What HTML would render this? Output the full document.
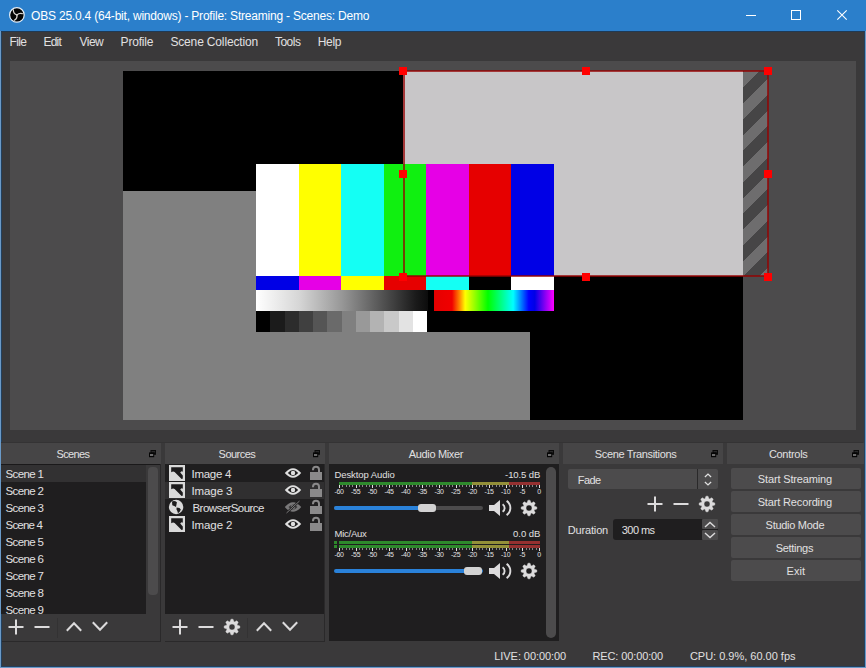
<!DOCTYPE html>
<html><head><meta charset="utf-8">
<style>
*{margin:0;padding:0;box-sizing:border-box}
html,body{width:866px;height:668px;overflow:hidden;background:#3a393a}
body{position:relative;font-family:"Liberation Sans",sans-serif;font-size:12px;color:#e1e0e1}
.a{position:absolute}
.t{position:absolute;white-space:nowrap;line-height:14px;letter-spacing:-0.3px}
.tx{position:absolute;white-space:nowrap;line-height:1}
.c{position:absolute;white-space:nowrap;line-height:14px;text-align:center;letter-spacing:-0.3px}
svg{position:absolute;overflow:visible}
.ic{fill:#dcdbdc}
.st{stroke:#dcdbdc;fill:none}
.h{position:absolute;width:8px;height:8px;background:#ff0000}
.dt{position:absolute;top:443px;height:21px;background:#464546}
.fl{position:absolute;top:450px;width:8px;height:8px}
.tick{position:absolute}
.lbl{position:absolute;font-size:7px;line-height:8px;white-space:nowrap;color:#e1e0e1;transform:translateX(-50%);letter-spacing:-0.3px}
.btn{position:absolute;left:731px;width:130px;height:21px;background:#4c4b4c;border-radius:2px;text-align:center;line-height:21px;letter-spacing:-0.3px}
</style></head><body>

<!-- window frame & title bar -->
<div class="a" style="left:0;top:0;width:866px;height:31px;background:#2b7fcb"></div>
<div class="a" style="left:0;top:31px;width:1px;height:637px;background:#6a9ac8"></div>
<div class="a" style="left:865px;top:31px;width:1px;height:637px;background:#6a9ac8"></div>
<div class="a" style="left:0;top:667px;width:866px;height:1px;background:#6a9ac8"></div>
<div class="a" style="left:1px;top:31px;width:1px;height:636px;background:#22405e"></div>
<div class="a" style="left:1px;top:31px;width:864px;height:1px;background:#1f3a55"></div>
<div class="a" style="left:864px;top:31px;width:1px;height:636px;background:#22405e"></div>
<div class="a" style="left:1px;top:666px;width:864px;height:1px;background:#22405e"></div>

<!-- OBS logo -->
<svg style="left:9px;top:7px" width="16" height="16" viewBox="0 0 16 16">
 <circle cx="7.9" cy="7.9" r="7.3" fill="#050505" stroke="#e6f0fa" stroke-width="1.2"/>
 <g stroke="#d8d4d0" stroke-width="1.3" fill="none" stroke-linecap="round">
  <path d="M7.9,7.9 Q4.6,7.2 4.3,3.0"/>
  <path d="M7.9,7.9 Q10.2,5.9 13.3,6.7"/>
  <path d="M7.9,7.9 Q8.6,11.4 5.3,13.3"/>
 </g>
</svg>

<!-- window controls -->
<div class="a" style="left:746px;top:15px;width:10px;height:1px;background:#fff"></div>
<div class="a" style="left:791px;top:10px;width:10px;height:10px;border:1px solid #fff"></div>
<svg style="left:837px;top:10px" width="10" height="10" viewBox="0 0 10 10"><path d="M0.3,0.3 L9.7,9.7 M9.7,0.3 L0.3,9.7" stroke="#fff" stroke-width="1.1"/></svg>

<!-- menubar -->

<!-- preview -->
<div class="a" style="left:10px;top:61px;width:846px;height:369px;background:#4c4b4c"></div>
<div class="a" style="left:123px;top:71px;width:620px;height:349px;background:#000"></div>
<div class="a" style="left:123px;top:191px;width:407px;height:229px;background:#808080"></div>
<div class="a" style="left:403px;top:71px;width:340px;height:205px;background:#c8c6c8"></div>
<div class="a" style="left:743px;top:71px;width:25px;height:205px;background:repeating-linear-gradient(-45deg,#6e6d6e 0px,#6e6d6e 6px,#464546 6px,#464546 17.2px,#6e6d6e 17.2px,#6e6d6e 22.27px)"></div>

<!-- test card -->
<div class="a" style="left:256px;top:164px;width:298px;height:168px;background:#000"></div>
<div class="a" style="left:256px;top:164px;width:298px;height:112px;display:flex">
 <div style="flex:1;background:#fff"></div><div style="flex:1;background:#ffff00"></div><div style="flex:1;background:#14fff4"></div><div style="flex:1;background:#10f010"></div><div style="flex:1;background:#e600e6"></div><div style="flex:1;background:#e60000"></div><div style="flex:1;background:#0000e6"></div>
</div>
<div class="a" style="left:256px;top:276px;width:298px;height:14px;display:flex">
 <div style="flex:1;background:#0000e6"></div><div style="flex:1;background:#e600e6"></div><div style="flex:1;background:#ffff00"></div><div style="flex:1;background:#e60000"></div><div style="flex:1;background:#14fff4"></div><div style="flex:1;background:#000"></div><div style="flex:1;background:#fff"></div>
</div>
<div class="a" style="left:256px;top:290px;width:172px;height:21px;background:linear-gradient(90deg,#fff 0%,#d6d6d6 25%,#979797 50%,#4e4e4e 75%,#1a1a1a 93%,#0c0c0c 100%)"></div>
<div class="a" style="left:434px;top:290px;width:120px;height:21px;background:linear-gradient(90deg,#e60000 0%,#f00000 15%,#ff8000 21%,#ffff00 26%,#00ff00 45%,#00ffff 66%,#0000ff 79%,#0000e6 84%,#ff00ff 100%)"></div>
<div class="a" style="left:256px;top:311px;width:171px;height:21px;display:flex">
 <div style="flex:1;background:#000"></div><div style="flex:1;background:#1b1b1b"></div><div style="flex:1;background:#2c2c2c"></div><div style="flex:1;background:#404040"></div><div style="flex:1;background:#555"></div><div style="flex:1;background:#6a6a6a"></div><div style="flex:1;background:#808080"></div><div style="flex:1;background:#999"></div><div style="flex:1;background:#b3b3b3"></div><div style="flex:1;background:#c9c9c9"></div><div style="flex:1;background:#e3e3e3"></div><div style="flex:1;background:#fff"></div>
</div>

<!-- selection box -->
<div class="a" style="left:403px;top:70px;width:366px;height:207px;border:2px solid rgba(150,0,0,0.72)"></div>
<div class="h" style="left:399px;top:67px"></div>
<div class="h" style="left:582px;top:67px"></div>
<div class="h" style="left:764px;top:67px"></div>
<div class="h" style="left:399px;top:170px"></div>
<div class="h" style="left:764px;top:170px"></div>
<div class="h" style="left:399px;top:273px"></div>
<div class="h" style="left:582px;top:273px"></div>
<div class="h" style="left:764px;top:273px"></div>

<!-- ============ DOCKS ============ -->
<svg width="0" height="0" style="position:absolute">
 <defs>
  <path id="gear" d="M6.15,2.61 L6.98,0.17 L9.02,0.17 L9.85,2.61 L10.51,2.88 L12.81,1.74 L14.26,3.19 L13.12,5.49 L13.39,6.15 L15.83,6.98 L15.83,9.02 L13.39,9.85 L13.12,10.51 L14.26,12.81 L12.81,14.26 L10.51,13.12 L9.85,13.39 L9.02,15.83 L6.98,15.83 L6.15,13.39 L5.49,13.12 L3.19,14.26 L1.74,12.81 L2.88,10.51 L2.61,9.85 L0.17,9.02 L0.17,6.98 L2.61,6.15 L2.88,5.49 L1.74,3.19 L3.19,1.74 L5.49,2.88Z M8,5 A3,3 0 1,0 8,11 A3,3 0 1,0 8,5Z" stroke="#dcdbdc" stroke-width="0.4" stroke-linejoin="round" fill-rule="evenodd"/>
  <g id="plus"><path d="M8,0.5 V15.5 M0.5,8 H15.5" stroke-width="2"/></g>
  <g id="minus"><path d="M0.5,8 H15.5" stroke-width="2"/></g>
  <g id="up"><path d="M0.8,9.8 L8,2.2 L15.2,9.8" stroke-width="2" fill="none"/></g>
  <g id="down"><path d="M0.8,1.2 L8,8.8 L15.2,1.2" stroke-width="2" fill="none"/></g>
  <g id="float"><path d="M1.5,0 h5.5 v4.8 h-5.5z" fill="#0a0a0a"/><path d="M2.5,1 h3.5 v1.5 h-3.5z" fill="#2a292a"/><path d="M0,2.4 h5.2 v4.8 h-5.2z" fill="#050505"/><path d="M1,4 h3.2 v2 h-3.2z" fill="#6a696a"/></g>
  <g id="img"><rect x="0" y="0" width="16" height="16" fill="#d9d9d9"/><path d="M2.2,2.2 H13.8 V6.9 Q13.2,5.9 12.2,6.6 L11.2,7.6 L13.8,10.6 V13.2 Q13.6,14.1 12.6,13.9 L5.6,7.0 Q4.4,6.0 3.2,6.8 L2.2,7.2 Z" fill="#1c1b1c"/></g>
  <g id="eye"><path d="M-0.2,5 Q8,-4.6 16.2,5 Q8,14.6 -0.2,5Z" fill="#e0e0e0"/><path d="M2.8,5 Q8,-0.9 13.2,5 Q8,10.9 2.8,5Z" fill="#1f1e1f"/><circle cx="8" cy="5" r="2.2" fill="#e0e0e0"/></g>
  <g id="lock"><rect x="0" y="6" width="12" height="8" fill="#8a898a"/><path d="M3,4.2 V3.8 A3,3 0 0,1 9,3.8 V6" stroke="#8a898a" stroke-width="2" fill="none"/></g>
 </defs>
</svg>

<!-- dock titles -->
<div class="a" style="left:1px;top:442px;width:862px;height:1px;background:#343334"></div>
<div class="dt" style="left:1px;width:160px"></div>
<div class="dt" style="left:165px;width:160px"></div>
<div class="dt" style="left:329px;width:230px"></div>
<div class="dt" style="left:563px;width:160px"></div>
<div class="dt" style="left:727px;width:137px"></div>
<svg class="fl" style="left:149px" width="8" height="8"><use href="#float"/></svg>
<svg class="fl" style="left:313px" width="8" height="8"><use href="#float"/></svg>
<svg class="fl" style="left:547px" width="8" height="8"><use href="#float"/></svg>
<svg class="fl" style="left:711px" width="8" height="8"><use href="#float"/></svg>
<svg class="fl" style="left:852px" width="8" height="8"><use href="#float"/></svg>

<!-- Scenes -->
<div class="a" style="left:1px;top:464px;width:145px;height:150px;background:#1f1e1f"></div>
<div class="a" style="left:1px;top:465px;width:145px;height:17px;background:#323132"></div>
<div class="a" style="left:1px;top:464px;width:159px;height:1px;background:#1a191a"></div>
<div class="a" style="left:148px;top:467px;width:10px;height:128px;background:#4c4b4c;border-radius:4px"></div>

<div class="a" style="left:57px;top:618px;width:1px;height:20px;background:#333233"></div>
<svg style="left:8px;top:619px" width="16" height="16" class="st"><use href="#plus"/></svg>
<svg style="left:34px;top:619px" width="16" height="16" class="st"><use href="#minus"/></svg>
<svg style="left:66px;top:621px" width="16" height="11" class="st"><use href="#up"/></svg>
<svg style="left:92px;top:621px" width="16" height="11" class="st"><use href="#down"/></svg>
<div class="a" style="left:160px;top:464px;width:1px;height:177px;background:#2a292a"></div>
<div class="a" style="left:2px;top:641px;width:159px;height:1px;background:#2a292a"></div>

<!-- Sources -->
<div class="a" style="left:165px;top:464px;width:160px;height:150px;background:#1f1e1f"></div>
<div class="a" style="left:165px;top:482px;width:160px;height:17px;background:#302f30"></div>
<svg style="left:169px;top:465px" width="16" height="16"><use href="#img"/></svg>
<svg style="left:169px;top:482px" width="16" height="16"><use href="#img"/></svg>
<svg style="left:168px;top:499px" width="16" height="16" viewBox="0 0 16 16">
 <circle cx="8.1" cy="8" r="7.2" fill="#d9d9d9"/>
 <path d="M4.0,2.6 Q6.4,1.4 8.9,3.2 L8.5,5.4 L8.0,7.9 L6.2,7.0 L4.3,6.3 Z" fill="#1c1b1c"/>
 <path d="M8.6,8.5 L11.5,9.0 L12.8,10.6 L11.7,12.8 L10.0,14.3 L9.3,12.1 L8.5,10.4 Z" fill="#1c1b1c"/>
</svg>
<svg style="left:169px;top:516px" width="16" height="16"><use href="#img"/></svg>
<svg style="left:285px;top:468px" width="16" height="10"><use href="#eye"/></svg>
<svg style="left:285px;top:485px" width="16" height="10"><use href="#eye"/></svg>
<svg style="left:285px;top:502px" width="16" height="10">
 <path d="M-0.2,5 Q8,-4.6 16.2,5 Q8,14.6 -0.2,5Z" fill="#7a797a"/><path d="M3.5,5 Q8,0 12.5,5 Q8,10 3.5,5Z" fill="#3a393a"/><circle cx="8" cy="5" r="2.2" fill="#7a797a"/>
 <path d="M1.5,11 L14.5,-1" stroke="#1f1e1f" stroke-width="2.2"/><path d="M1.5,11 L14.5,-1" stroke="#7a797a" stroke-width="1"/>
</svg>
<svg style="left:285px;top:519px" width="16" height="10"><use href="#eye"/></svg>
<svg style="left:310px;top:466px" width="12" height="14"><use href="#lock"/></svg>
<svg style="left:310px;top:483px" width="12" height="14"><use href="#lock"/></svg>
<svg style="left:310px;top:500px" width="12" height="14"><use href="#lock"/></svg>
<svg style="left:310px;top:517px" width="12" height="14"><use href="#lock"/></svg>
<div class="a" style="left:247px;top:618px;width:1px;height:20px;background:#333233"></div>
<svg style="left:172px;top:619px" width="16" height="16" class="st"><use href="#plus"/></svg>
<svg style="left:198px;top:619px" width="16" height="16" class="st"><use href="#minus"/></svg>
<svg style="left:224px;top:619px" width="16" height="16" class="ic"><use href="#gear"/></svg>
<svg style="left:256px;top:621px" width="16" height="11" class="st"><use href="#up"/></svg>
<svg style="left:282px;top:621px" width="16" height="11" class="st"><use href="#down"/></svg>
<div class="a" style="left:324px;top:464px;width:1px;height:177px;background:#2a292a"></div>
<div class="a" style="left:165px;top:641px;width:160px;height:1px;background:#2a292a"></div>

<!-- Audio mixer -->
<div class="a" style="left:329px;top:464px;width:230px;height:177px;background:#1f1e1f"></div>
<div class="a" style="left:546px;top:467px;width:10px;height:171px;background:#4c4b4c;border-radius:5px"></div>
<div class="a" style="left:339px;top:482px;width:133px;height:3px;background:#2e8a2c"></div>
<div class="a" style="left:472px;top:482px;width:37px;height:3px;background:#938f38"></div>
<div class="a" style="left:509px;top:482px;width:31px;height:3px;background:#953030"></div>
<div class="a" style="left:334px;top:506px;width:149px;height:4px;background:#4c4b4c;border-radius:2px"></div>
<div class="a" style="left:334px;top:506px;width:90px;height:4px;background:#2a82da;border-radius:2px"></div>
<div class="a" style="left:418px;top:504px;width:18px;height:8px;background:#d2d2d2;border-radius:3px"></div>
<svg style="left:489px;top:500px" width="22" height="16" viewBox="0 0 22 16">
 <path d="M0,5 H5 L11,0 V16 L5,11 H0Z" fill="#dcdbdc"/>
 <path d="M13.6,4.2 A4.6,4.6 0 0,1 13.6,11.8" stroke="#dcdbdc" stroke-width="1.9" fill="none"/>
 <path d="M17.6,0.9 A8.6,8.6 0 0,1 17.6,15.1" stroke="#dcdbdc" stroke-width="1.9" fill="none"/>
</svg>
<svg style="left:521px;top:500px" width="16" height="16" class="ic"><use href="#gear"/></svg>
<div class="a" style="left:334px;top:541px;width:3px;height:3px;background:#2e8a2c"></div>
<div class="a" style="left:334px;top:545px;width:3px;height:3px;background:#2e8a2c"></div>
<div class="a" style="left:339px;top:541px;width:133px;height:3px;background:#2e8a2c"></div>
<div class="a" style="left:472px;top:541px;width:37px;height:3px;background:#938f38"></div>
<div class="a" style="left:509px;top:541px;width:31px;height:3px;background:#953030"></div>
<div class="a" style="left:339px;top:545px;width:133px;height:3px;background:#2e8a2c"></div>
<div class="a" style="left:472px;top:545px;width:37px;height:3px;background:#938f38"></div>
<div class="a" style="left:509px;top:545px;width:31px;height:3px;background:#953030"></div>
<div class="a" style="left:334px;top:569px;width:149px;height:4px;background:#2a82da;border-radius:2px"></div>
<div class="a" style="left:464px;top:567px;width:18px;height:8px;background:#d2d2d2;border-radius:3px"></div>
<svg style="left:489px;top:563px" width="22" height="16" viewBox="0 0 22 16">
 <path d="M0,5 H5 L11,0 V16 L5,11 H0Z" fill="#dcdbdc"/>
 <path d="M13.6,4.2 A4.6,4.6 0 0,1 13.6,11.8" stroke="#dcdbdc" stroke-width="1.9" fill="none"/>
 <path d="M17.6,0.9 A8.6,8.6 0 0,1 17.6,15.1" stroke="#dcdbdc" stroke-width="1.9" fill="none"/>
</svg>
<svg style="left:521px;top:563px" width="16" height="16" class="ic"><use href="#gear"/></svg>
<svg style="left:0;top:0" width="866" height="668"><path d="M342.5,485 v2 M346.5,485 v2 M349.5,485 v2 M352.5,485 v2 M359.5,485 v2 M362.5,485 v2 M366.5,485 v2 M369.5,485 v2 M376.5,485 v2 M379.5,485 v2 M382.5,485 v2 M386.5,485 v2 M392.5,485 v2 M396.5,485 v2 M399.5,485 v2 M402.5,485 v2 M409.5,485 v2 M412.5,485 v2 M416.5,485 v2 M419.5,485 v2 M426.5,485 v2 M429.5,485 v2 M432.5,485 v2 M436.5,485 v2 M442.5,485 v2 M446.5,485 v2 M449.5,485 v2 M452.5,485 v2 M459.5,485 v2 M462.5,485 v2 M466.5,485 v2 M469.5,485 v2 M476.5,485 v2 M479.5,485 v2 M482.5,485 v2 M486.5,485 v2 M492.5,485 v2 M496.5,485 v2 M499.5,485 v2 M502.5,485 v2 M509.5,485 v2 M512.5,485 v2 M516.5,485 v2 M519.5,485 v2 M526.5,485 v2 M529.5,485 v2 M532.5,485 v2 M536.5,485 v2" stroke="#8a898a" stroke-width="1"/><path d="M339.5,485 v3 M356.5,485 v3 M372.5,485 v3 M389.5,485 v3 M406.5,485 v3 M422.5,485 v3 M439.5,485 v3 M456.5,485 v3 M472.5,485 v3 M489.5,485 v3 M506.5,485 v3 M522.5,485 v3 M539.5,485 v3" stroke="#e1e0e1" stroke-width="1"/></svg>
<div class="lbl" style="left:339.0px;top:488px">-60</div><div class="lbl" style="left:355.7px;top:488px">-55</div><div class="lbl" style="left:372.3px;top:488px">-50</div><div class="lbl" style="left:389.0px;top:488px">-45</div><div class="lbl" style="left:405.7px;top:488px">-40</div><div class="lbl" style="left:422.3px;top:488px">-35</div><div class="lbl" style="left:439.0px;top:488px">-30</div><div class="lbl" style="left:455.7px;top:488px">-25</div><div class="lbl" style="left:472.3px;top:488px">-20</div><div class="lbl" style="left:489.0px;top:488px">-15</div><div class="lbl" style="left:505.7px;top:488px">-10</div><div class="lbl" style="left:522.3px;top:488px">-5</div><div class="lbl" style="left:539.0px;top:488px">0</div>
<svg style="left:0;top:0" width="866" height="668"><path d="M342.5,548 v2 M346.5,548 v2 M349.5,548 v2 M352.5,548 v2 M359.5,548 v2 M362.5,548 v2 M366.5,548 v2 M369.5,548 v2 M376.5,548 v2 M379.5,548 v2 M382.5,548 v2 M386.5,548 v2 M392.5,548 v2 M396.5,548 v2 M399.5,548 v2 M402.5,548 v2 M409.5,548 v2 M412.5,548 v2 M416.5,548 v2 M419.5,548 v2 M426.5,548 v2 M429.5,548 v2 M432.5,548 v2 M436.5,548 v2 M442.5,548 v2 M446.5,548 v2 M449.5,548 v2 M452.5,548 v2 M459.5,548 v2 M462.5,548 v2 M466.5,548 v2 M469.5,548 v2 M476.5,548 v2 M479.5,548 v2 M482.5,548 v2 M486.5,548 v2 M492.5,548 v2 M496.5,548 v2 M499.5,548 v2 M502.5,548 v2 M509.5,548 v2 M512.5,548 v2 M516.5,548 v2 M519.5,548 v2 M526.5,548 v2 M529.5,548 v2 M532.5,548 v2 M536.5,548 v2" stroke="#8a898a" stroke-width="1"/><path d="M339.5,548 v3 M356.5,548 v3 M372.5,548 v3 M389.5,548 v3 M406.5,548 v3 M422.5,548 v3 M439.5,548 v3 M456.5,548 v3 M472.5,548 v3 M489.5,548 v3 M506.5,548 v3 M522.5,548 v3 M539.5,548 v3" stroke="#e1e0e1" stroke-width="1"/></svg>
<div class="lbl" style="left:339.0px;top:551px">-60</div><div class="lbl" style="left:355.7px;top:551px">-55</div><div class="lbl" style="left:372.3px;top:551px">-50</div><div class="lbl" style="left:389.0px;top:551px">-45</div><div class="lbl" style="left:405.7px;top:551px">-40</div><div class="lbl" style="left:422.3px;top:551px">-35</div><div class="lbl" style="left:439.0px;top:551px">-30</div><div class="lbl" style="left:455.7px;top:551px">-25</div><div class="lbl" style="left:472.3px;top:551px">-20</div><div class="lbl" style="left:489.0px;top:551px">-15</div><div class="lbl" style="left:505.7px;top:551px">-10</div><div class="lbl" style="left:522.3px;top:551px">-5</div><div class="lbl" style="left:539.0px;top:551px">0</div>
<!-- Scene Transitions -->
<div class="a" style="left:568px;top:469px;width:150px;height:20px;background:#4c4b4c;border-radius:2px"></div>
<div class="a" style="left:697px;top:469px;width:1px;height:20px;background:#2a292a"></div>
<svg style="left:703px;top:472px" width="10" height="14" viewBox="0 0 10 14"><path d="M1.9,5 L5,2.1 L8.1,5 M1.9,10 L5,12.9 L8.1,10" stroke="#e0e0e0" stroke-width="1.3" fill="none"/></svg>
<svg style="left:647px;top:496px" width="16" height="16" class="st"><use href="#plus"/></svg>
<svg style="left:673px;top:496px" width="16" height="16" class="st"><use href="#minus"/></svg>
<svg style="left:699px;top:496px" width="16" height="16" class="ic"><use href="#gear"/></svg>
<div class="a" style="left:613px;top:519px;width:105px;height:21px;background:#1f1e1f;border-radius:3px"></div>
<div class="a" style="left:702px;top:519px;width:16px;height:10px;background:#4c4b4c;border-radius:1px"></div>
<div class="a" style="left:702px;top:530px;width:16px;height:10px;background:#4c4b4c;border-radius:1px"></div>
<svg style="left:703px;top:520px" width="14" height="20" viewBox="0 0 14 20"><path d="M2,7 L7,2.5 L12,7 M2,13 L7,17.5 L12,13" stroke="#dcdbdc" stroke-width="1.4" fill="none"/></svg>

<!-- Controls -->
<div class="btn" style="top:468px"></div>
<div class="btn" style="top:491px"></div>
<div class="btn" style="top:514px"></div>
<div class="btn" style="top:537px"></div>
<div class="btn" style="top:560px"></div>

<!-- status bar -->



<!-- texts -->
<div class="tx" style="left:31.10px;top:9.64px;font-size:12px;letter-spacing:-0.210px;color:#ffffff">OBS 25.0.4 (64-bit, windows) - Profile: Streaming - Scenes: Demo</div>
<div class="tx" style="left:9.50px;top:35.84px;font-size:12px;letter-spacing:-0.654px">File</div>
<div class="tx" style="left:43.50px;top:35.84px;font-size:12px;letter-spacing:-0.781px">Edit</div>
<div class="tx" style="left:79.60px;top:35.84px;font-size:12px;letter-spacing:-0.576px">View</div>
<div class="tx" style="left:120.60px;top:35.84px;font-size:12px;letter-spacing:-0.190px">Profile</div>
<div class="tx" style="left:170.40px;top:35.84px;font-size:12px;letter-spacing:-0.152px">Scene Collection</div>
<div class="tx" style="left:275.00px;top:35.84px;font-size:12px;letter-spacing:-0.528px">Tools</div>
<div class="tx" style="left:317.70px;top:35.84px;font-size:12px;letter-spacing:-0.302px">Help</div>
<div class="tx" style="left:56.60px;top:448.69px;font-size:11px;letter-spacing:-0.678px">Scenes</div>
<div class="tx" style="left:218.60px;top:448.69px;font-size:11px;letter-spacing:-0.526px">Sources</div>
<div class="tx" style="left:408.80px;top:448.69px;font-size:11px;letter-spacing:-0.351px">Audio Mixer</div>
<div class="tx" style="left:594.80px;top:448.69px;font-size:11px;letter-spacing:-0.346px">Scene Transitions</div>
<div class="tx" style="left:768.90px;top:448.69px;font-size:11px;letter-spacing:-0.294px">Controls</div>
<div class="tx" style="left:5.50px;top:468.87px;font-size:11.5px;letter-spacing:-0.617px">Scene 1</div>
<div class="tx" style="left:5.50px;top:485.87px;font-size:11.5px;letter-spacing:-0.617px">Scene 2</div>
<div class="tx" style="left:5.50px;top:502.87px;font-size:11.5px;letter-spacing:-0.617px">Scene 3</div>
<div class="tx" style="left:5.50px;top:519.87px;font-size:11.5px;letter-spacing:-0.784px">Scene 4</div>
<div class="tx" style="left:5.50px;top:536.87px;font-size:11.5px;letter-spacing:-0.617px">Scene 5</div>
<div class="tx" style="left:5.50px;top:553.87px;font-size:11.5px;letter-spacing:-0.617px">Scene 6</div>
<div class="tx" style="left:5.50px;top:570.87px;font-size:11.5px;letter-spacing:-0.617px">Scene 7</div>
<div class="tx" style="left:5.50px;top:587.87px;font-size:11.5px;letter-spacing:-0.617px">Scene 8</div>
<div class="tx" style="left:5.50px;top:604.87px;font-size:11.5px;letter-spacing:-0.617px">Scene 9</div>
<div class="tx" style="left:191.50px;top:468.87px;font-size:11.5px;letter-spacing:-0.276px">Image 4</div>
<div class="tx" style="left:191.50px;top:485.87px;font-size:11.5px;letter-spacing:-0.109px">Image 3</div>
<div class="tx" style="left:192.50px;top:502.87px;font-size:11.5px;letter-spacing:-0.560px">BrowserSource</div>
<div class="tx" style="left:191.50px;top:519.87px;font-size:11.5px;letter-spacing:-0.109px">Image 2</div>
<div class="tx" style="left:334.40px;top:469.76px;font-size:9.5px;letter-spacing:-0.067px">Desktop Audio</div>
<div class="tx" style="left:505.10px;top:469.96px;font-size:9.5px;letter-spacing:-0.097px">-10.5 dB</div>
<div class="tx" style="left:334.60px;top:528.66px;font-size:9.5px;letter-spacing:-0.272px">Mic/Aux</div>
<div class="tx" style="left:513.10px;top:528.66px;font-size:9.5px;letter-spacing:-0.046px">0.0 dB</div>
<div class="tx" style="left:577.80px;top:474.79px;font-size:11px;letter-spacing:-0.552px">Fade</div>
<div class="tx" style="left:567.80px;top:525.29px;font-size:11px;letter-spacing:-0.166px">Duration</div>
<div class="tx" style="left:621.80px;top:525.29px;font-size:11px;letter-spacing:-0.574px">300 ms</div>
<div class="tx" style="left:757.80px;top:473.79px;font-size:11px;letter-spacing:-0.143px">Start Streaming</div>
<div class="tx" style="left:757.70px;top:496.79px;font-size:11px;letter-spacing:-0.151px">Start Recording</div>
<div class="tx" style="left:765.60px;top:519.79px;font-size:11px;letter-spacing:-0.284px">Studio Mode</div>
<div class="tx" style="left:775.70px;top:542.79px;font-size:11px;letter-spacing:-0.292px">Settings</div>
<div class="tx" style="left:786.50px;top:565.79px;font-size:11px;letter-spacing:0.040px">Exit</div>
<div class="tx" style="left:494.30px;top:650.89px;font-size:11px;letter-spacing:-0.066px">LIVE: 00:00:00</div>
<div class="tx" style="left:592.50px;top:650.89px;font-size:11px;letter-spacing:-0.120px">REC: 00:00:00</div>
<div class="tx" style="left:689.90px;top:650.89px;font-size:11px;letter-spacing:-0.009px">CPU: 0.9%, 60.00 fps</div>
</body></html>
